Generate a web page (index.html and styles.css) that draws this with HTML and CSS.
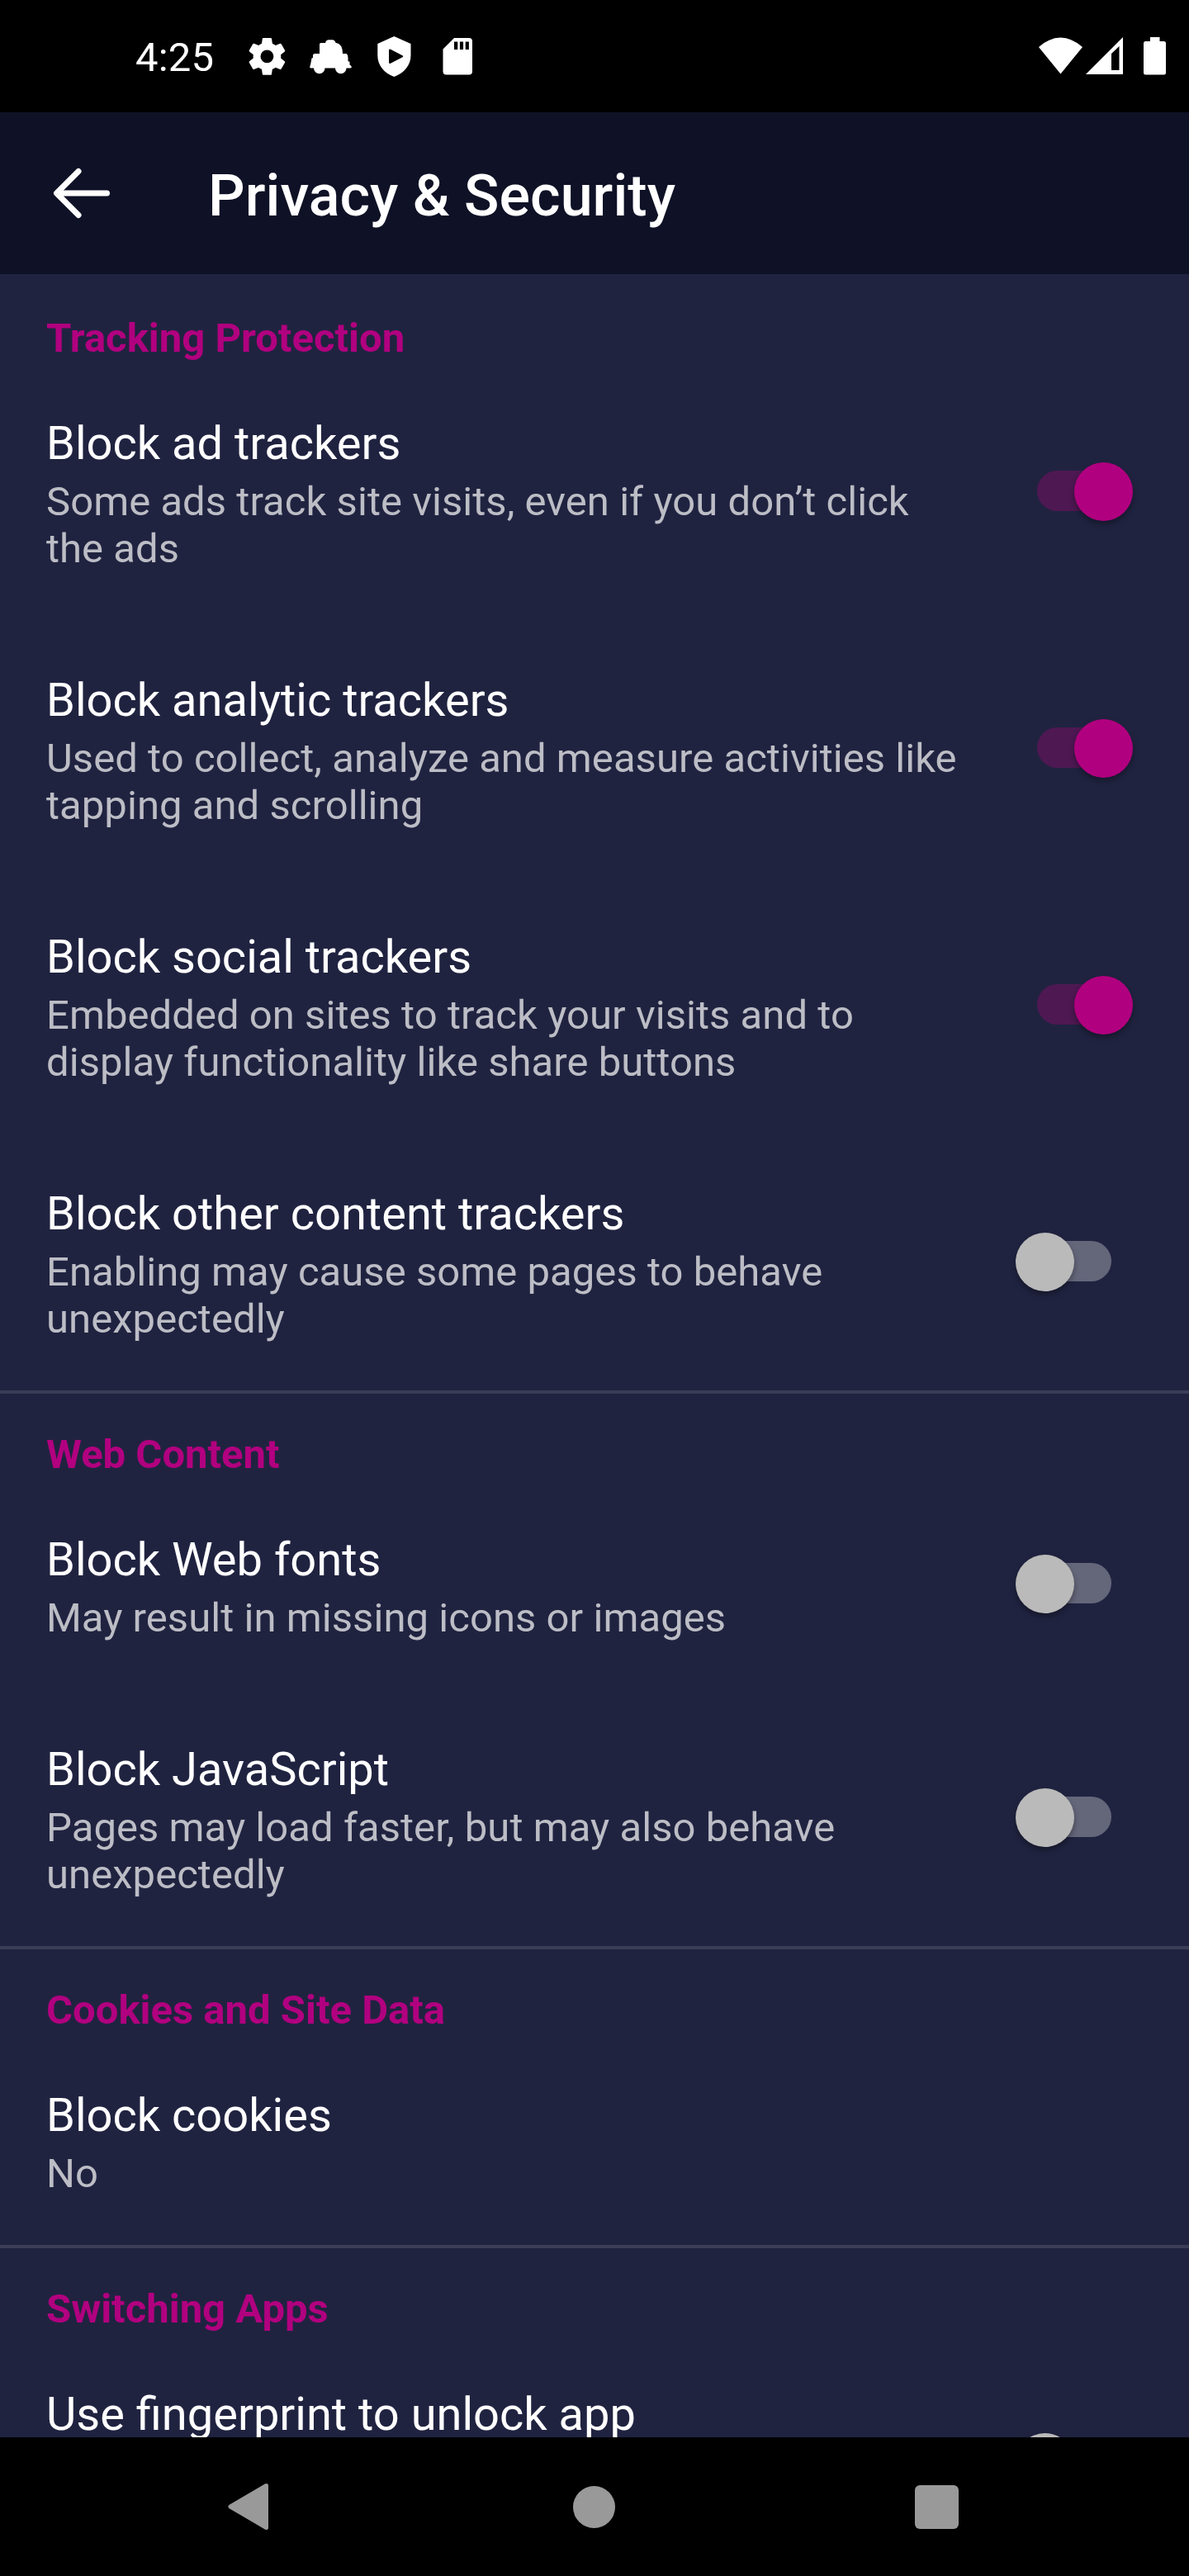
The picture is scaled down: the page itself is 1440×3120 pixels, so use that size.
FILE: index.html
```html
<!DOCTYPE html>
<html lang="en">
<head>
<meta charset="utf-8">
<title>Privacy &amp; Security</title>
<link rel="stylesheet" href="styles.css">
</head>
<body>
<div class="screen">
  <div class="status">
    <span class="clock">4:25</span>
    <svg class="status-left" width="300" height="60" viewBox="290 40 300 60" fill="#fff">
      <g transform="translate(295.4 40.3) scale(2.335)"><path fill-rule="evenodd" d="M19.14 12.94c.04-.3.06-.61.06-.94 0-.32-.02-.64-.07-.94l2.03-1.58c.18-.14.23-.41.12-.61l-1.92-3.32c-.12-.22-.37-.29-.59-.22l-2.39.96c-.5-.38-1.03-.7-1.62-.94L14.4 2.81c-.04-.24-.24-.41-.48-.41h-3.84c-.24 0-.43.17-.47.41L9.25 5.35c-.59.24-1.13.57-1.62.94L5.24 5.33c-.22-.08-.47 0-.59.22L2.74 8.87c-.12.21-.08.47.12.61l2.03 1.58c-.05.3-.09.63-.09.94s.02.64.07.94l-2.03 1.58c-.18.14-.23.41-.12.61l1.92 3.32c.12.22.37.29.59.22l2.39-.96c.5.38 1.03.7 1.62.94l.36 2.54c.05.24.24.41.48.41h3.84c.24 0 .44-.17.47-.41l.36-2.54c.59-.24 1.13-.56 1.62-.94l2.39.96c.22.08.47 0 .59-.22l1.92-3.32c.12-.22.07-.47-.12-.61zM12 15.4A3.4 3.4 0 1 1 12 8.6a3.4 3.4 0 0 1 0 6.8z"/></g>
      <path d="M387 52h7q1-3.700 4-3.700h4.500q3 0 4 3.500Q415 53 415 65h4q2 0 2.500 5v4l2 1v3.500l1.500 1q2 3-1 3h-4.500a6.500 6.500 0 0 1-13.500 0h-12.500a6.500 6.500 0 0 1-13.500 0h-4q-1.500-1 0-4l1.500-8 1.500-.5v-3q0-2 2.500-2h5.500v-11.500q0-1.500 1.500-1.500z"/>
      <path fill-rule="evenodd" d="M477.300 44l20.200 9v14c0 12-8 21.500-20.200 26C465 88.500 457.300 79 457.300 67V53zM471 61v14.500q0 2 2 1.300l14-7.300q2.500-1.200 0-2.500l-14-7.300q-2-.7-2 1.300z"/>
      <path fill-rule="evenodd" d="M550 46H568q4 0 4 4v36.500q0 4-4 4h-27.500q-4 0-4-4V59.500zM550 50.500v9.500h4.300v-9.500zm6.900 0v9.500h4.200v-9.500zm6.800 0v9.500h4.200v-9.500z"/>
    </svg>
    <svg class="status-right" width="160" height="60" viewBox="1254 40 160 60" fill="#fff">
      <path d="M1258 57Q1284.500 34 1311 57L1284.500 89.500z"/>
      <path fill-rule="evenodd" d="M1315 90l45-45v45zM1346 65v20h9.500V56z"/>
      <path d="M1393 45h11.500v5h5q2.500 0 2.500 2.500V88q0 2.500-2.500 2.500h-22q-2.500 0-2.500-2.500V52.500q0-2.500 2.500-2.500h5.500z"/>
    </svg>
  </div>
  <header class="bar">
    <svg width="72" height="68" viewBox="0 0 72 68" fill="none" stroke="#fff" stroke-width="7" stroke-linecap="round" stroke-linejoin="round"><path d="M32 7.500L5.500 34 32 60.500M6 34h60.500"/></svg>
    <h1>Privacy &amp; Security</h1>
  </header>
  <main class="list">
    <section>
      <h2>Tracking Protection</h2>
      <div class="row"><div class="text"><h3>Block ad trackers</h3><p>Some ads track site visits, even if you don’t click<br>the ads</p></div><span class="switch on"></span></div>
      <div class="row"><div class="text"><h3>Block analytic trackers</h3><p>Used to collect, analyze and measure activities like<br>tapping and scrolling</p></div><span class="switch on"></span></div>
      <div class="row"><div class="text"><h3>Block social trackers</h3><p>Embedded on sites to track your visits and to<br>display functionality like share buttons</p></div><span class="switch on"></span></div>
      <div class="row"><div class="text"><h3>Block other content trackers</h3><p>Enabling may cause some pages to behave<br>unexpectedly</p></div><span class="switch"></span></div>
    </section>
    <section>
      <h2>Web Content</h2>
      <div class="row short"><div class="text"><h3>Block Web fonts</h3><p>May result in missing icons or images</p></div><span class="switch"></span></div>
      <div class="row"><div class="text"><h3>Block JavaScript</h3><p>Pages may load faster, but may also behave<br>unexpectedly</p></div><span class="switch"></span></div>
    </section>
    <section>
      <h2>Cookies and Site Data</h2>
      <div class="row short"><div class="text"><h3>Block cookies</h3><p>No</p></div></div>
    </section>
    <section>
      <h2>Switching Apps</h2>
      <div class="row"><div class="text"><h3>Use fingerprint to unlock app</h3></div><span class="switch"></span></div>
    </section>
  </main>
  <nav class="nav">
    <svg width="52" height="58" viewBox="0 0 52 58"><path d="M47.500 3.500v51L4 29z" fill="#999" stroke="#999" stroke-width="5" stroke-linejoin="round"/></svg>
    <span class="home"></span>
    <span class="recent"></span>
  </nav>
</div>
</body>
</html>
```
FILE: styles.css
```css
* { box-sizing: border-box; }
body { margin: 0; background: #000; font-family: Roboto, sans-serif; color: #fff; }
h1, h2, h3, p { margin: 0; }
.screen { width: 1440px; height: 3120px; display: flex; flex-direction: column; overflow: hidden; }
.status { height: 136px; flex: none; display: flex; align-items: flex-start; padding: 40px 26px 0 164px; }
.clock { width: 126px; font-size: 49px; line-height: 60px; letter-spacing: .2px; white-space: nowrap; }
.status-left { flex: none; }
.status-right { margin-left: auto; flex: none; }
.bar { height: 196px; flex: none; background: #0f1126; display: flex; align-items: center; padding: 0 0 0 63px; }
.bar h1 { margin: 6px 0 0 117px; font-size: 70px; line-height: 82px; letter-spacing: .04px; font-weight: 500; white-space: nowrap; }
.list { height: 2620px; flex: none; overflow: hidden; background: #202340; }
section { padding-bottom: 1px; }
section + section { box-shadow: inset 0 4px #3b3d57; }
h2 { height: 107px; padding: 49px 56px 0; font-size: 49px; line-height: 57px; font-weight: 700; color: #b1007f; }
.row { height: 311px; display: flex; align-items: flex-start; justify-content: space-between; padding: 0 57px 0 56px; }
.short { height: 254px; }
.text { padding-top: 65px; white-space: nowrap; }
h3 { font-size: 56px; line-height: 66px; font-weight: 400; }
p { margin-top: 9px; font-size: 49px; line-height: 57px; letter-spacing: .05px; color: #bcbdc5; }
.switch { position: relative; width: 153px; height: 70px; margin-top: 121px; flex: none; }
.short .switch { margin-top: 92px; }
.switch::before { content: ""; position: absolute; top: 10px; left: 26px; width: 90px; height: 49px; border-radius: 25px; background: #64667a; }
.switch::after { content: ""; position: absolute; top: 0; left: 0; width: 71px; height: 71px; border-radius: 50%; background: #bababa; box-shadow: 0 4px 7px rgba(0, 0, 0, .35); }
.switch.on::before { background: #4e1853; }
.switch.on::after { left: 71px; background: #b1007f; }
.nav { flex: 1; display: flex; align-items: center; justify-content: space-between; padding: 0 279px 0 275px; }
.home { width: 51px; height: 51px; margin-left: 4px; border-radius: 50%; background: #999; }
.recent { width: 53px; height: 53px; border-radius: 6px; background: #999; }
```
